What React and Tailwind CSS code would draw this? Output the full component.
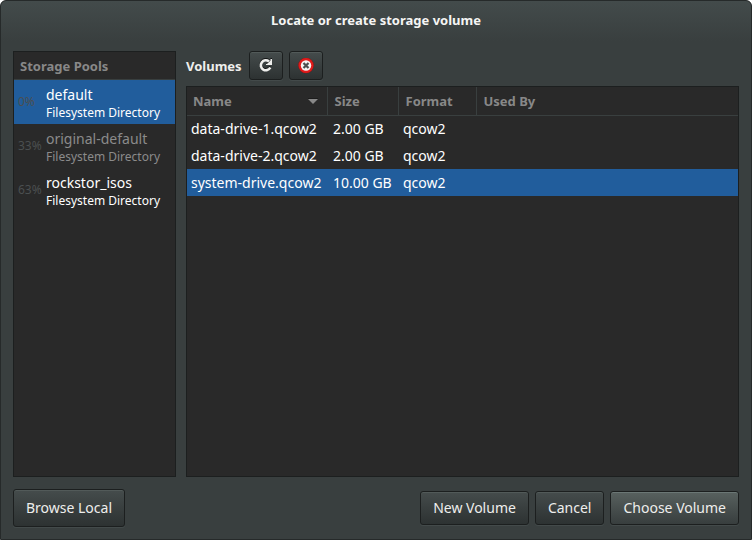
import { useState } from "react";

const pools = [
  { name: "default", kind: "Filesystem Directory", used: "0%", active: true },
  { name: "original-default", kind: "Filesystem Directory", used: "33%", active: false },
  { name: "rockstor_isos", kind: "Filesystem Directory", used: "63%", active: true },
];

const volumes = [
  { name: "data-drive-1.qcow2", size: "2.00 GB", format: "qcow2", usedBy: "" },
  { name: "data-drive-2.qcow2", size: "2.00 GB", format: "qcow2", usedBy: "" },
  { name: "system-drive.qcow2", size: "10.00 GB", format: "qcow2", usedBy: "" },
];

const buttonBase =
  "flex items-center justify-center rounded-[3px] border border-[#1c1f1f] bg-linear-to-b text-[#eeeeec] whitespace-nowrap";
const normalFace =
  "from-[#454c4c] to-[#2d3232] shadow-[inset_0_1px_0_#525a59,0_1px_0_#434a4a]";
const defaultFace =
  "from-[#58615f] to-[#383e3e] shadow-[inset_0_1px_0_#6b7775,0_1px_0_#434a4a]";

function ReloadIcon() {
  return (
    <svg width="16" height="16" viewBox="0 0 16 16" fill="none" aria-hidden="true">
      <path d="M11 2.4A5 5 0 1 0 12.3 8.5" stroke="#141616" strokeWidth="2.6" />
      <path d="M14 0V6H8V5L9.5 4.5L12.5 1.5V0Z" fill="#141616" />
      <path d="M11 3.4A5 5 0 1 0 12.3 9.5" stroke="#eeeeec" strokeWidth="2.6" />
      <path d="M14 1V7H8V6L9.5 5.5L12.5 2.5V1Z" fill="#eeeeec" />
    </svg>
  );
}

function StopIcon() {
  return (
    <svg width="16" height="16" viewBox="0 0 16 16" fill="none" aria-hidden="true">
      <circle cx="8" cy="7.5" r="7.8" fill="#8e1414" />
      <circle cx="8" cy="7.5" r="7.4" fill="#e01b1b" />
      <circle cx="8" cy="7.5" r="5.2" fill="#f4f4f2" />
      <path d="M5.5 5L10.5 10M10.5 5L5.5 10" stroke="#4c4f4f" strokeWidth="2.2" />
    </svg>
  );
}

function DialogButton({ primary, className, children }) {
  return (
    <button type="button" className={`${buttonBase} ${primary ? defaultFace : normalFace} ${className}`}>
      {children}
    </button>
  );
}

export default function App() {
  const [pool, setPool] = useState("default");
  const [volume, setVolume] = useState("system-drive.qcow2");

  return (
    <div className="min-h-screen flex flex-col bg-white font-['Noto_Sans',sans-serif] text-[14px] leading-5 text-white">
      <main className="flex flex-1 flex-col rounded-t-[6px] border border-[#262a2a] bg-[#393f3f] bg-linear-to-b from-[#434b4b] to-[#393f3f] to-[40px] px-3 pb-3">
        <h1 className="pt-[9px] pb-[21px] text-center text-[13px] font-bold text-[#f5f5f4]">
          Locate or create storage volume
        </h1>

        <div className="flex flex-1 gap-[10px]">
          <section className="flex w-[163px] shrink-0 flex-col border border-[#1c1f1f] bg-[#292929]">
            <h2 className="border-b border-[#393f3f] px-[6px] pt-1 pb-[3px] text-[13px] font-bold text-[#888888]">Storage Pools</h2>
            <ul>
              {pools.map((p) => (
                <li key={p.name}>
                  <button
                    type="button"
                    onClick={() => setPool(p.name)}
                    className={`flex h-11 w-full items-center text-left ${
                      pool === p.name ? "bg-[#215d9c]" : ""
                    } ${p.active ? "text-white" : "text-[#8b8b8b]"}`}
                  >
                    <span className="w-8 shrink-0 pl-1 text-[12px] text-[#4b4f50]">{p.used}</span>
                    <span className="flex flex-col pt-[2px] whitespace-nowrap">
                      <span className="leading-5">{p.name}</span>
                      <span className="text-[12px] leading-4">{p.kind}</span>
                    </span>
                  </button>
                </li>
              ))}
            </ul>
          </section>

          <section className="flex min-w-0 flex-1 flex-col">
            <div className="mb-[6px] flex items-center gap-[6px] text-[#eeeeec]">
              <h2 className="pr-px text-[13px] font-bold">Volumes</h2>
              <button type="button" aria-label="Refresh volume list" className={`${buttonBase} ${normalFace} h-[29px] w-[34px]`}>
                <ReloadIcon />
              </button>
              <button type="button" aria-label="Delete volume" className={`${buttonBase} ${normalFace} h-[29px] w-[34px]`}>
                <StopIcon />
              </button>
            </div>

            <div className="flex-1 border border-[#1c1f1f] bg-[#292929]">
              <table className="w-full table-fixed text-left">
                <colgroup>
                  <col className="w-[140px]" />
                  <col className="w-[71px]" />
                  <col className="w-[78px]" />
                  <col />
                </colgroup>
                <thead className="text-[13px] text-[#888888]">
                  <tr className="h-7 border-b border-[#393f3f]">
                    <th className="border-r border-[#393f3f] px-[6px] font-bold" aria-sort="ascending">
                      <span className="flex items-center justify-between">
                        Name
                        <svg width="16" height="6" viewBox="0 0 16 6" aria-hidden="true">
                          <path d="M3 0H13" stroke="#111111" />
                          <path d="M3 1H13L8 6Z" fill="#888888" />
                        </svg>
                      </span>
                    </th>
                    <th className="border-r border-[#393f3f] px-[7px] font-bold">Size</th>
                    <th className="border-r border-[#393f3f] px-[7px] font-bold">Format</th>
                    <th className="px-[7px] font-bold">Used By</th>
                  </tr>
                </thead>
                <tbody>
                  {volumes.map((v) => (
                    <tr
                      key={v.name}
                      onClick={() => setVolume(v.name)}
                      className={`h-[27px] whitespace-nowrap ${volume === v.name ? "bg-[#215d9c]" : ""}`}
                    >
                      <td className="pl-1">{v.name}</td>
                      <td className="pl-[6px]">{v.size}</td>
                      <td className="pl-[5px]">{v.format}</td>
                      <td className="pl-[5px]">{v.usedBy}</td>
                    </tr>
                  ))}
                </tbody>
              </table>
            </div>
          </section>
        </div>

        <footer className="mt-3 flex items-center gap-[6px]">
          <DialogButton className="mr-auto h-[38px] px-3">Browse Local</DialogButton>
          <DialogButton className="h-[34px] px-3">New Volume</DialogButton>
          <DialogButton className="h-[34px] px-3">Cancel</DialogButton>
          <DialogButton primary className="h-[34px] px-3">Choose Volume</DialogButton>
        </footer>
      </main>
    </div>
  );
}
